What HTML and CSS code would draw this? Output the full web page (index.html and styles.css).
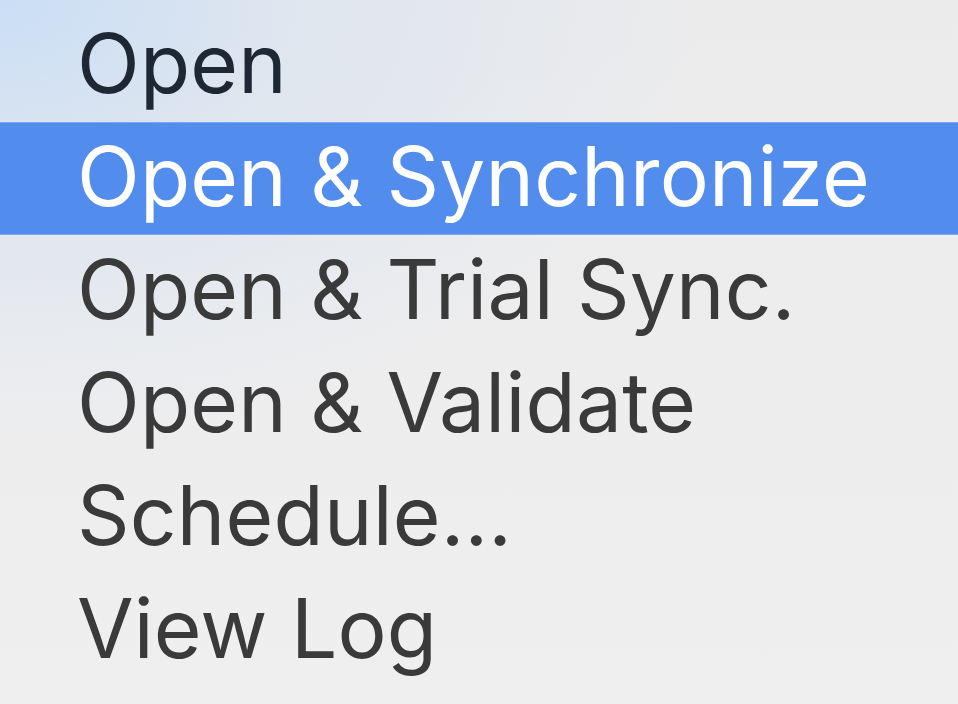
FILE: index.html
```html
<!DOCTYPE html>
<html lang="en">
<head>
    <meta charset="UTF-8">
    <title>Menu</title>
    <link rel="stylesheet" href="styles.css">
</head>
<body>
    <ul class="menu">
        <li class="item top">Open</li>
        <li class="item active">Open &amp; Synchronize</li>
        <li class="item">Open &amp; Trial Sync.</li>
        <li class="item">Open &amp; Validate</li>
        <li class="item">Schedule...</li>
        <li class="item">View Log</li>
    </ul>
</body>
</html>
```

FILE: styles.css
```css
html, body {
    margin: 0;
    height: 100%;
}
body {
    background:
        radial-gradient(ellipse 700px 440px at 0 0, #cadef5 0%, rgba(218,228,240,0.65) 45%, rgba(236,236,237,0) 100%),
        linear-gradient(180deg, #ebebec 0%, #efeff0 100%);
    font-family: Inter, "Liberation Sans", sans-serif;
    overflow: hidden;
}
.menu {
    margin: 0;
    padding: 9px 0 0;
    list-style: none;
}
.item {
    height: 113px;
    padding: 0 0 4px 77px;
    box-sizing: border-box;
    display: flex;
    align-items: center;
    font-size: 82px;
    letter-spacing: 0.2px;
    color: #3a3a3b;
    white-space: nowrap;
}
.item.top {
    color: #1e2834;
}
.item.active {
    background: #528ced;
    color: #fff;
    box-shadow: inset 0 1px 0 #7aa7f0, inset 0 -1px 0 #7aa7f0;
}
```
